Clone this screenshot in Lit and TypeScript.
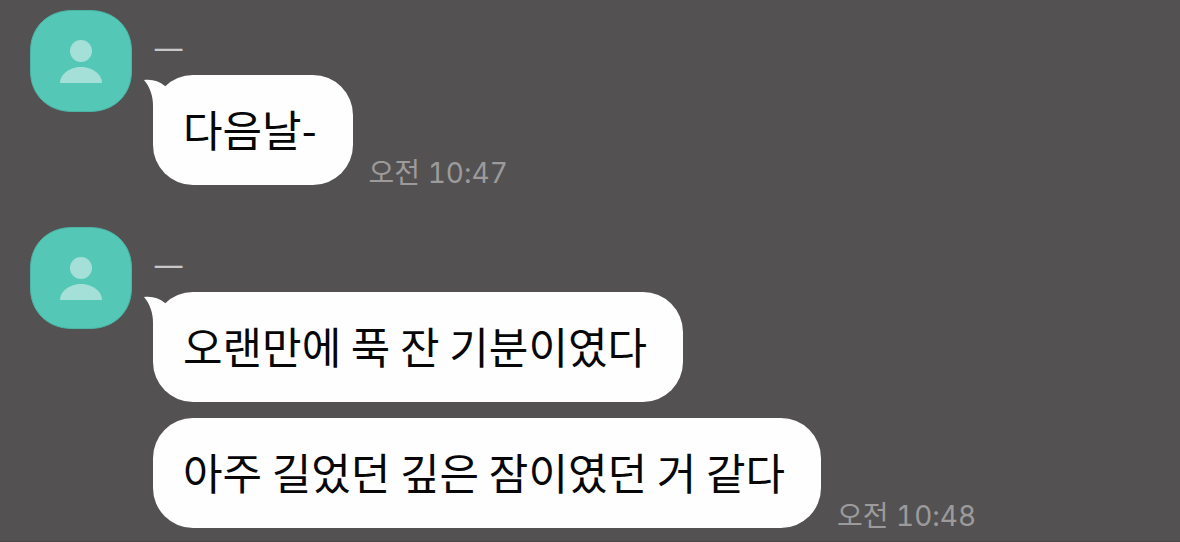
import { LitElement, html, css, svg } from "lit";
import { customElement, property } from "lit/decorators.js";

interface MessageGroup {
  sender: string;
  messages: string[];
  time: string;
}

const groups: MessageGroup[] = [
  { sender: "ㅡ", messages: ["다음날-"], time: "오전 10:47" },
  {
    sender: "ㅡ",
    messages: ["오랜만에 푹 잔 기분이였다", "아주 길었던 깊은 잠이였던 거 같다"],
    time: "오전 10:48",
  },
];

const person = svg`
  <path d="M42 .5H60C84 .5 101.500 17 101.500 41V61C101.500 85 84 101.500 60 101.500H42C18 101.500 .5 85 .5 61V41C.5 17 18 .5 42 .5Z"
    fill="#54c7b6" stroke="#4bb5a6"/>
  <circle cx="51" cy="41" r="11" fill="#a4e0d8"/>
  <path d="M30 73C30 64 40 57 51 57S72 64 72 73Z" fill="#a4e0d8"/>`;

@customElement("chat-bubble")
export class ChatBubble extends LitElement {
  @property({ type: Boolean }) tail = false;

  static styles = css`
    :host {
      display: block;
      position: relative;
      width: fit-content;
      box-sizing: border-box;
      padding: 23px 36px 27px 30px;
      border-radius: 40px;
      background: #fefefe;
      color: #070707;
      font-family: "Noto Sans CJK KR", sans-serif;
      font-size: 43px;
      line-height: 60px;
    }
    .tail {
      position: absolute;
      left: -9px;
      top: 4px;
      width: 26px;
      height: 36px;
      fill: #fefefe;
    }
    .text {
      position: relative;
    }
  `;

  render() {
    return html`
      ${this.tail
        ? html`<svg class="tail" viewBox="0 0 26 36" aria-hidden="true">
            <path d="M0 1C8 0 15 2 21 7L26 18 9 36V27C9 17 6 8 0 1Z" />
          </svg>`
        : null}
      <span class="text"><slot></slot></span>
    `;
  }
}

@customElement("message-group")
export class MessageGroupElement extends LitElement {
  @property({ attribute: false }) group!: MessageGroup;

  static styles = css`
    :host {
      display: block;
    }
    .group {
      display: flex;
      align-items: flex-start;
      gap: 21px;
    }
    .avatar {
      flex: none;
      width: 102px;
      height: 102px;
    }
    .body {
      display: flex;
      flex-direction: column;
      gap: 16px;
      min-width: 0;
    }
    .sender {
      margin-top: 17px;
      margin-bottom: -16px;
      height: 48px;
      line-height: 48px;
      font-size: 34px;
      color: #c9c7c8;
    }
    .row {
      display: flex;
      align-items: flex-end;
      gap: 16px;
    }
    .time {
      flex: none;
      font-size: 28px;
      font-variant-numeric: tabular-nums;
      line-height: 24px;
      color: #9c9a9b;
    }
  `;

  render() {
    const { sender, messages, time } = this.group;
    return html`
      <article class="group">
        <svg class="avatar" viewBox="0 0 102 102" role="img" aria-label="프로필">${person}</svg>
        <div class="body">
          <div class="sender">${sender}</div>
          ${messages.map(
            (text, i) => html`<div class="row">
              <chat-bubble ?tail=${i === 0}>${text}</chat-bubble>
              ${i === messages.length - 1 ? html`<time class="time">${time}</time>` : null}
            </div>`
          )}
        </div>
      </article>
    `;
  }
}

@customElement("app-root")
export class AppRoot extends LitElement {
  static styles = css`
    :host {
      display: block;
      box-sizing: border-box;
      min-height: 100vh;
      background: #535152;
      border-bottom: 1px solid #4a4447;
      font-family: Inter, "Noto Sans CJK KR", sans-serif;
    }
    .chat {
      display: flex;
      flex-direction: column;
      gap: 42px;
      padding: 10px 30px 13px;
    }
  `;

  render() {
    return html`<main class="chat">
      ${groups.map((group) => html`<message-group .group=${group}></message-group>`)}
    </main>`;
  }
}
